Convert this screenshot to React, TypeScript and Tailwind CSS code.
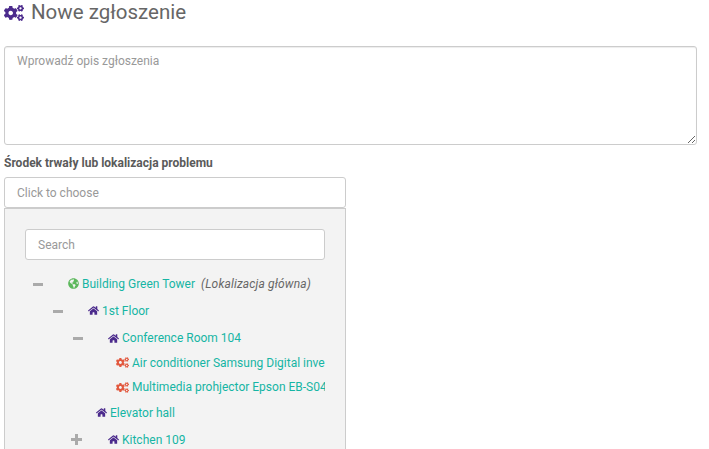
import { FaCogs, FaGlobeAmericas, FaHome } from "react-icons/fa";

function Toggle({ open }: { open: boolean }) {
  if (open) {
    return (
      <span className="relative block h-[10px] w-[10px]">
        <span className="absolute left-0 top-[4px] h-[3px] w-[10px] bg-[#aaaaaa]" />
      </span>
    );
  }
  return (
    <span className="relative block h-[11px] w-[11px]">
      <span className="absolute left-0 top-[4px] h-[3px] w-[11px] bg-[#aaaaaa]" />
      <span className="absolute left-[4px] top-0 h-[11px] w-[3px] bg-[#aaaaaa]" />
    </span>
  );
}

function Row({ className, toggle, icon, label, note }: {
  className: string;
  toggle?: "open" | "closed";
  icon: "globe" | "home" | "cogs";
  label: string;
  note?: string;
}) {
  return (
    <div className={`flex items-center whitespace-nowrap ${className}`}>
      {toggle && (
        <span className={toggle === "open" ? "mr-[25px]" : "mr-[26px]"}>
          <Toggle open={toggle === "open"} />
        </span>
      )}
      {icon === "globe" && <FaGlobeAmericas className="mr-[3px] h-[11px] w-[11px] shrink-0 text-[#5cb85c]" />}
      {icon === "home" && <FaHome className="mr-[3px] h-[11px] w-[11px] shrink-0 text-[#4b2a8c]" />}
      {icon === "cogs" && <FaCogs className="mr-[3px] h-[13px] w-[13px] shrink-0 text-[#e2583e]" />}
      <span className="text-[#16b5a4]">{label}</span>
      {note && <span className="ml-[6px] italic tracking-[0.15px] text-[#666666]">{note}</span>}
    </div>
  );
}

export default function App() {
  return (
    <div className="h-[449px] w-[709px] overflow-hidden bg-white font-['Roboto',sans-serif] text-[12px] text-[#555555]">
      <div className="flex h-[25px] items-center pl-[4px]">
        <FaCogs className="mr-[7px] h-[20px] w-[20px] text-[#4b2a8c]" />
        <h1 className="text-[20.5px] leading-none text-[#666666]">Nowe zgłoszenie</h1>
      </div>

      <div className="px-[4px] pt-[21px]">
        <textarea
          placeholder="Wprowadź opis zgłoszenia"
          className="block h-[99px] w-[693px] rounded-[3px] border border-[#cccccc] px-[12px] py-[5px] text-[12px] text-[#555555] shadow-[inset_0_1px_1px_rgba(0,0,0,0.075)] outline-none placeholder:text-[#999999]"
        />
        <div className="mt-[11px] h-[14px] text-[12px] font-bold leading-[14px] text-[#5a5a5a]">
          Środek trwały lub lokalizacja problemu
        </div>

        <div className="mt-[7px] w-[342px]">
          <input
            placeholder="Click to choose"
            className="block h-[31px] w-full rounded-[3px] border border-[#cccccc] bg-white px-[12px] text-[12px] outline-none placeholder:text-[#999999]"
          />
          <div className="h-[260px] border border-[#cccccc] bg-[#f3f3f3] px-[20px] pt-[20px]">
            <input
              placeholder="Search"
              className="block h-[31px] w-full rounded-[3px] border border-[#cccccc] bg-white px-[12px] text-[12px] outline-none placeholder:text-[#999999]"
            />
            <div className="mt-[10px] overflow-hidden">
              <Row className="h-[27px] pl-[8px]" toggle="open" icon="globe" label="Building Green Tower" note="(Lokalizacja główna)" />
              <Row className="h-[27px] pl-[28px]" toggle="open" icon="home" label="1st Floor" />
              <Row className="h-[26px] pl-[48px] pt-[2px]" toggle="open" icon="home" label="Conference Room 104" />
              <Row className="h-[25px] pl-[91px]" icon="cogs" label="Air conditioner Samsung Digital inverter" />
              <Row className="h-[24px] pl-[91px]" icon="cogs" label="Multimedia prohjector Epson EB-S04" />
              <Row className="h-[27px] pl-[71px]" icon="home" label="Elevator hall" />
              <Row className="h-[27px] pl-[46px]" toggle="closed" icon="home" label="Kitchen 109" />
            </div>
          </div>
        </div>
      </div>
    </div>
  );
}
